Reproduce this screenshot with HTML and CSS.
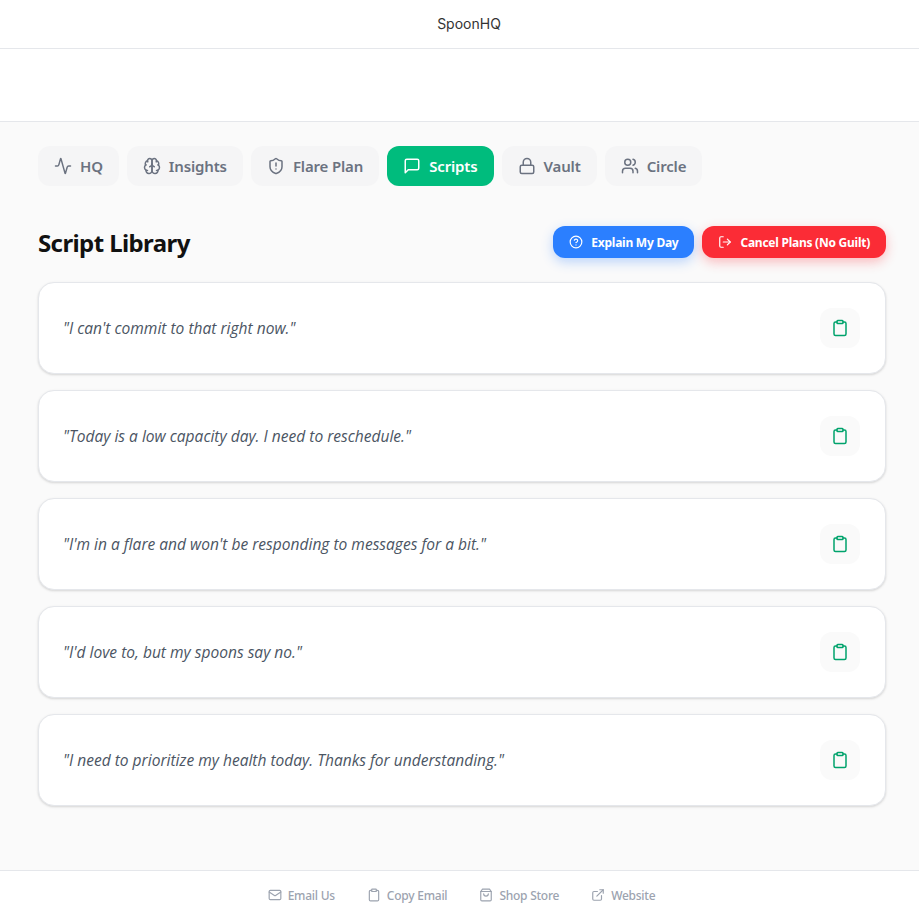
FILE: index.html
```html
<!DOCTYPE html>
<html lang="en">
<head>
<meta charset="utf-8">
<title>SpoonHQ</title>
<link rel="stylesheet" href="styles.css">
</head>
<body>
<svg class="defs" aria-hidden="true">
  <symbol id="i-activity" viewBox="0 0 24 24"><path d="M22 12h-2.48a2 2 0 0 0-1.93 1.46l-2.35 8.36a.25.25 0 0 1-.48 0L9.24 2.18a.25.25 0 0 0-.48 0l-2.35 8.36A2 2 0 0 1 4.49 12H2"/></symbol>
  <symbol id="i-brain" viewBox="0 0 24 24"><path d="M12 5a3 3 0 1 0-5.997.125 4 4 0 0 0-2.526 5.77 4 4 0 0 0 .556 6.588A4 4 0 1 0 12 18Z"/><path d="M12 5a3 3 0 1 1 5.997.125 4 4 0 0 1 2.526 5.77 4 4 0 0 1-.556 6.588A4 4 0 1 1 12 18Z"/><path d="M15 13a4.5 4.5 0 0 1-3-4 4.5 4.5 0 0 1-3 4"/><path d="M17.599 6.5a3 3 0 0 0 .399-1.375"/><path d="M6.003 5.125A3 3 0 0 0 6.401 6.5"/><path d="M3.477 10.896a4 4 0 0 1 .585-.396"/><path d="M19.938 10.5a4 4 0 0 1 .585.396"/><path d="M6 18a4 4 0 0 1-1.967-.516"/><path d="M19.967 17.484A4 4 0 0 1 18 18"/></symbol>
  <symbol id="i-shield" viewBox="0 0 24 24"><path d="M20 13c0 5-3.5 7.5-7.66 8.95a1 1 0 0 1-.67-.01C7.5 20.5 4 18 4 13V6a1 1 0 0 1 1-1c2 0 4.5-1.2 6.24-2.72a1.17 1.17 0 0 1 1.52 0C14.51 3.81 17 5 19 5a1 1 0 0 1 1 1z"/><path d="M12 8v4"/><path d="M12 16h.01"/></symbol>
  <symbol id="i-message" viewBox="0 0 24 24"><path d="M21 15a2 2 0 0 1-2 2H7l-4 4V5a2 2 0 0 1 2-2h14a2 2 0 0 1 2 2z"/></symbol>
  <symbol id="i-lock" viewBox="0 0 24 24"><rect x="3" y="11" width="18" height="11" rx="2" ry="2"/><path d="M7 11V7a5 5 0 0 1 10 0v4"/></symbol>
  <symbol id="i-users" viewBox="0 0 24 24"><path d="M16 21v-2a4 4 0 0 0-4-4H6a4 4 0 0 0-4 4v2"/><circle cx="9" cy="7" r="4"/><path d="M22 21v-2a4 4 0 0 0-3-3.87"/><path d="M16 3.13a4 4 0 0 1 0 7.75"/></symbol>
  <symbol id="i-help" viewBox="0 0 24 24"><circle cx="12" cy="12" r="10"/><path d="M9.09 9a3 3 0 0 1 5.83 1c0 2-3 3-3 3"/><path d="M12 17h.01"/></symbol>
  <symbol id="i-logout" viewBox="0 0 24 24"><path d="M9 21H5a2 2 0 0 1-2-2V5a2 2 0 0 1 2-2h4"/><polyline points="16 17 21 12 16 7"/><line x1="21" y1="12" x2="9" y2="12"/></symbol>
  <symbol id="i-clipboard" viewBox="0 0 24 24"><rect x="8" y="2" width="8" height="4" rx="1" ry="1"/><path d="M16 4h2a2 2 0 0 1 2 2v14a2 2 0 0 1-2 2H6a2 2 0 0 1-2-2V6a2 2 0 0 1 2-2h2"/></symbol>
  <symbol id="i-mail" viewBox="0 0 24 24"><rect x="2" y="4" width="20" height="16" rx="2"/><path d="m22 7-8.97 5.7a1.94 1.94 0 0 1-2.06 0L2 7"/></symbol>
  <symbol id="i-bag" viewBox="0 0 24 24"><path d="M6 2 3 6v14a2 2 0 0 0 2 2h14a2 2 0 0 0 2-2V6l-3-4Z"/><path d="M3 6h18"/><path d="M16 10a4 4 0 0 1-8 0"/></symbol>
  <symbol id="i-external" viewBox="0 0 24 24"><path d="M15 3h6v6"/><path d="M10 14 21 3"/><path d="M18 13v6a2 2 0 0 1-2 2H5a2 2 0 0 1-2-2V8a2 2 0 0 1 2-2h6"/></symbol>
</svg>

<div class="page">
  <header class="topbar">SpoonHQ</header>
  <div class="band"></div>

  <main class="main">
    <nav class="tabs">
      <a class="tab"><svg class="icon icon-18"><use href="#i-activity"/></svg>HQ</a>
      <a class="tab"><svg class="icon icon-18"><use href="#i-brain"/></svg>Insights</a>
      <a class="tab"><svg class="icon icon-18"><use href="#i-shield"/></svg>Flare Plan</a>
      <a class="tab tab-active"><svg class="icon icon-18"><use href="#i-message"/></svg>Scripts</a>
      <a class="tab"><svg class="icon icon-18"><use href="#i-lock"/></svg>Vault</a>
      <a class="tab"><svg class="icon icon-18"><use href="#i-users"/></svg>Circle</a>
    </nav>

    <section class="library">
      <div class="library-head">
        <h1 class="title">Script Library</h1>
        <div class="actions">
          <button class="action action-blue"><svg class="icon icon-14"><use href="#i-help"/></svg>Explain My Day</button>
          <button class="action action-red"><svg class="icon icon-14"><use href="#i-logout"/></svg>Cancel Plans (No Guilt)</button>
        </div>
      </div>

      <div class="cards">
        <article class="card"><p class="quote">"I can't commit to that right now."</p><button class="copy"><svg class="icon icon-18"><use href="#i-clipboard"/></svg></button></article>
        <article class="card"><p class="quote">"Today is a low capacity day. I need to reschedule."</p><button class="copy"><svg class="icon icon-18"><use href="#i-clipboard"/></svg></button></article>
        <article class="card"><p class="quote">"I'm in a flare and won't be responding to messages for a bit."</p><button class="copy"><svg class="icon icon-18"><use href="#i-clipboard"/></svg></button></article>
        <article class="card"><p class="quote">"I'd love to, but my spoons say no."</p><button class="copy"><svg class="icon icon-18"><use href="#i-clipboard"/></svg></button></article>
        <article class="card"><p class="quote">"I need to prioritize my health today. Thanks for understanding."</p><button class="copy"><svg class="icon icon-18"><use href="#i-clipboard"/></svg></button></article>
      </div>
    </section>
  </main>

  <footer class="footer">
    <a class="foot-link"><svg class="icon icon-14"><use href="#i-mail"/></svg>Email Us</a>
    <a class="foot-link"><svg class="icon icon-14"><use href="#i-clipboard"/></svg>Copy Email</a>
    <a class="foot-link"><svg class="icon icon-14"><use href="#i-bag"/></svg>Shop Store</a>
    <a class="foot-link"><svg class="icon icon-14"><use href="#i-external"/></svg>Website</a>
  </footer>
</div>
</body>
</html>
```

FILE: styles.css
```css
* { box-sizing: border-box; }

html, body { margin: 0; padding: 0; }

body {
  font-family: "Noto Sans", sans-serif;
  background: #fafafa;
  color: #111;
}

.defs { display: none; }

.icon {
  display: block;
  flex: none;
  fill: none;
  stroke: currentColor;
  stroke-width: 2;
  stroke-linecap: round;
  stroke-linejoin: round;
}

.icon-18 { width: 18px; height: 18px; }
.icon-14 { width: 14px; height: 14px; }

.page {
  display: flex;
  flex-direction: column;
  min-height: 919px;
}

.topbar {
  height: 49px;
  padding: 0 0 1px 19px;
  display: flex;
  align-items: center;
  justify-content: center;
  background: #fff;
  border-bottom: 1px solid #e5e7eb;
  font-family: Inter, sans-serif;
  font-size: 14px;
  color: #333;
}

.band {
  height: 73px;
  background: #fff;
  border-bottom: 1px solid #e5e7eb;
}

.main {
  flex: 1;
  padding: 24px 33px 0 38px;
}

.tabs {
  display: flex;
  gap: 8px;
}

.tab {
  display: flex;
  align-items: center;
  gap: 8px;
  height: 40px;
  padding: 0 16px;
  border-radius: 12px;
  background: #f5f5f6;
  color: #6b7280;
  font-size: 15px;
  font-weight: 600;
  letter-spacing: -0.15px;
}

.tab-active {
  background: #00bc7d;
  color: #fff;
}

.library { margin-top: 40px; }

.library-head {
  display: flex;
  align-items: center;
  justify-content: space-between;
  height: 32px;
  margin-bottom: 24px;
}

.title {
  margin: 0;
  padding-top: 1px;
  font-size: 24px;
  line-height: 32px;
  font-weight: 700;
  letter-spacing: -0.6px;
  color: #111;
}

.actions {
  display: flex;
  gap: 8px;
}

.action {
  display: flex;
  align-items: center;
  gap: 8px;
  height: 32px;
  padding: 0 16px;
  border: 0;
  border-radius: 12px;
  color: #fff;
  font-family: inherit;
  font-size: 12px;
  font-weight: 700;
  letter-spacing: -0.25px;
}

.action-blue {
  background: #2b7fff;
  box-shadow: 0 4px 12px rgba(43, 127, 255, 0.3);
}

.action-red {
  background: #fb2c36;
  box-shadow: 0 4px 12px rgba(251, 44, 54, 0.3);
}

.cards {
  display: flex;
  flex-direction: column;
  gap: 16px;
}

.card {
  display: flex;
  align-items: center;
  justify-content: space-between;
  height: 92px;
  padding: 0 25px 0 24px;
  background: #fff;
  border: 1px solid #e5e7eb;
  border-radius: 16px;
  box-shadow: 0 1px 3px rgba(0, 0, 0, 0.1), 0 1px 2px rgba(0, 0, 0, 0.06);
}

.quote {
  margin: 0;
  font-family: "Open Sans", sans-serif;
  font-size: 15.55px;
  font-style: italic;
  color: #4b5563;
}

.copy {
  display: flex;
  align-items: center;
  justify-content: center;
  width: 40px;
  height: 40px;
  padding: 0;
  border: 0;
  border-radius: 12px;
  background: #fafafa;
  color: #00a36c;
}

.footer {
  display: flex;
  align-items: center;
  justify-content: center;
  gap: 32px;
  height: 49px;
  padding-left: 4px;
  background: #fff;
  border-top: 1px solid #e5e7eb;
}

.foot-link {
  display: flex;
  align-items: center;
  gap: 6px;
  color: #9ca3af;
  font-size: 12px;
  font-weight: 500;
  letter-spacing: -0.25px;
}
```
